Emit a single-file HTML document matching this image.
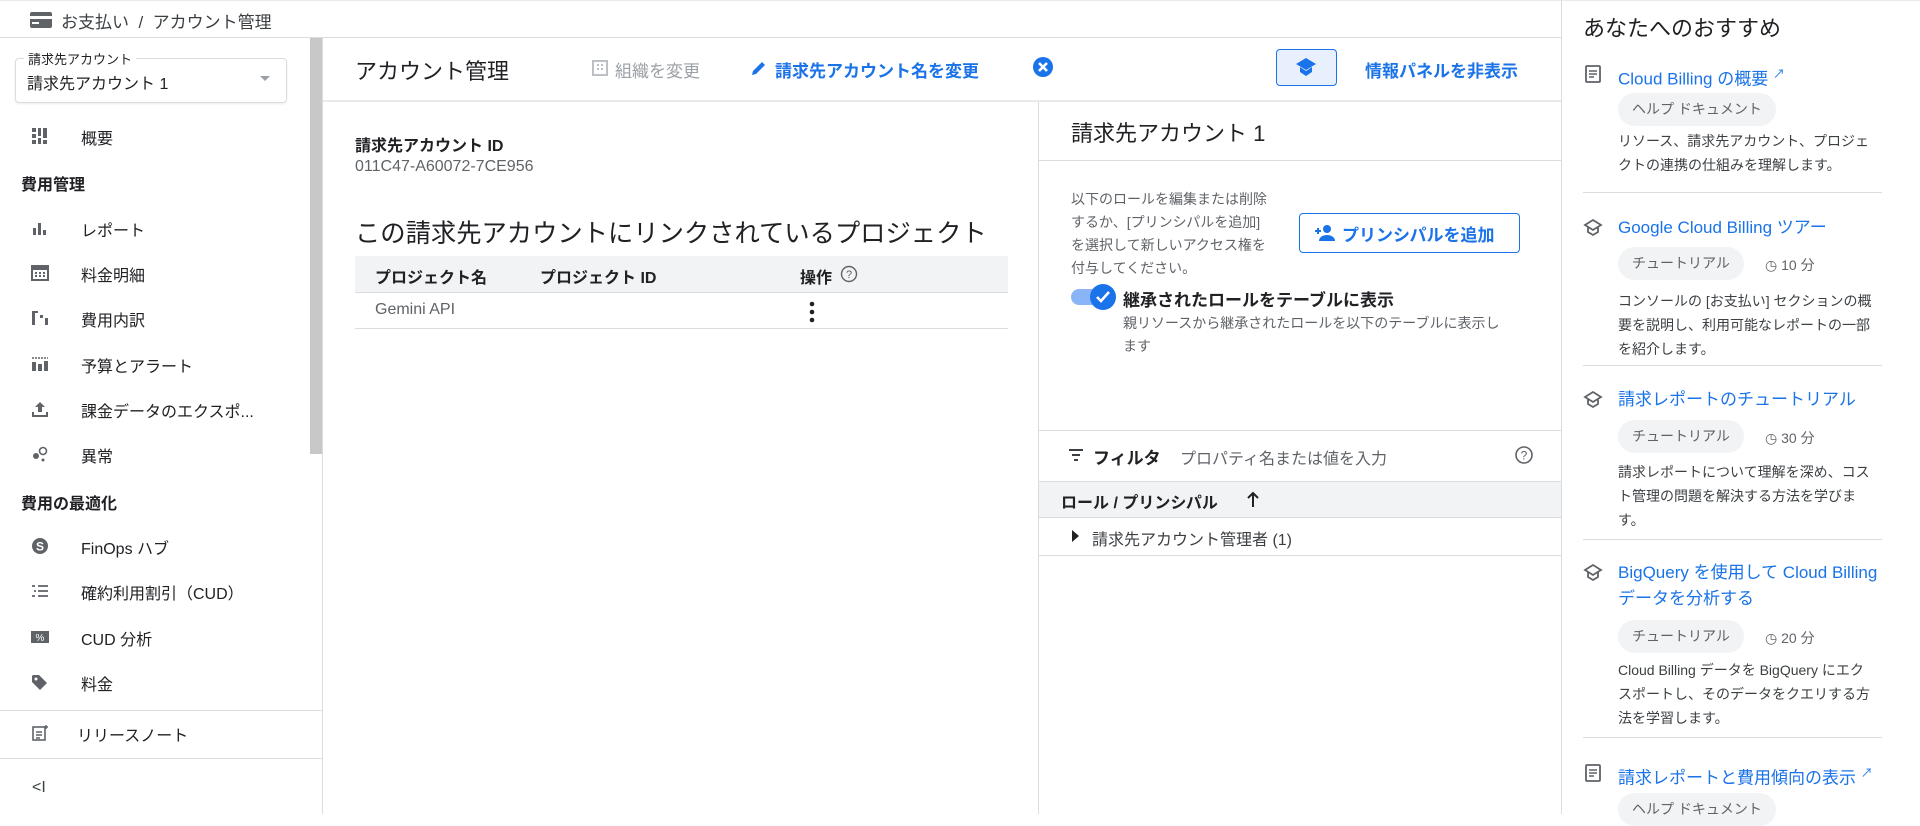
<!DOCTYPE html>
<html><head><meta charset="utf-8">
<style>
*{box-sizing:border-box;margin:0;padding:0}
body{width:1920px;height:814px;overflow:hidden;background:#fff;font-family:"Liberation Sans","Noto Sans CJK JP",sans-serif;color:#202124;position:relative}
.a{position:absolute;white-space:nowrap}
.hl{position:absolute;height:1px;background:#dadce0}
.vl{position:absolute;width:1px;background:#dadce0}
.nav{position:absolute;left:0;width:310px;height:40px;font-size:16px;color:#202124}
.nav .ic{position:absolute;left:30px;top:11px;width:20px;height:18px}
.nav .t{position:absolute;left:81px;top:9px}
.sec{position:absolute;left:21px;font-size:16px;font-weight:bold}
.blue{color:#1a73e8}
.chip{position:absolute;left:1618px;height:33px;border-radius:17px;background:#f1f3f4;color:#5f6368;font-size:14px;line-height:33px;padding:0 14px}
.desc{position:absolute;left:1618px;width:258px;font-size:14px;line-height:24px;color:#3c4043}
.rt{position:absolute;left:1618px;font-size:17px;color:#1a73e8;line-height:26px}
.ri{position:absolute;left:1583px;width:20px;height:20px}
.tm{position:absolute;font-size:14px;color:#5f6368}
</style></head><body>

<div class="hl" style="left:0;top:0;width:1920px;background:#e8eaed"></div>
<svg class="a" style="left:29px;top:11px" width="24" height="18" viewBox="0 0 24 18"><rect x="1" y="1" width="22" height="16" rx="2" fill="#5f6368"/><rect x="1" y="5" width="22" height="3" fill="#fff"/><rect x="3" y="11" width="7" height="2" fill="#fff"/></svg>
<div class="a" style="left:61px;top:8px;font-size:17px;color:#3c4043">お支払い&nbsp;&nbsp;/&nbsp;&nbsp;アカウント管理</div>
<div class="hl" style="left:0;top:37px;width:1561px"></div>

<div class="a" style="left:15px;top:58px;width:272px;height:45px;border:1px solid #dadce0;border-radius:4px;box-shadow:0 1px 2px rgba(0,0,0,.08)"></div>
<div class="a" style="left:24px;top:49px;background:#fff;padding:0 4px;font-size:13px;color:#202124">請求先アカウント</div>
<div class="a" style="left:27px;top:70px;font-size:16px">請求先アカウント 1</div>
<div class="a" style="left:260px;top:76px;width:0;height:0;border-left:5px solid transparent;border-right:5px solid transparent;border-top:5px solid #9aa0a6"></div>
<div class="a" style="left:310px;top:38px;width:12px;height:416px;background:#c8c8c8"></div>
<div class="vl" style="left:322px;top:38px;height:776px"></div>

<div class="nav" style="top:116px"><svg class="ic" viewBox="0 0 20 18"><rect x="2" y="1" width="4" height="4" fill="#5f6368"/><rect x="2" y="7" width="4" height="4" fill="#5f6368"/><rect x="2" y="13" width="4" height="4" fill="#5f6368"/><rect x="8" y="1" width="3" height="8" fill="#5f6368"/><rect x="8" y="11" width="3" height="6" fill="#5f6368"/><rect x="13" y="1" width="4" height="10" fill="#5f6368"/><rect x="13" y="13" width="4" height="4" fill="#5f6368"/></svg><span class="t">概要</span></div>
<div class="sec" style="top:171px">費用管理</div>
<div class="nav" style="top:208px"><svg class="ic" viewBox="0 0 20 18"><rect x="3" y="9" width="3" height="7" fill="#5f6368"/><rect x="8" y="4" width="3" height="12" fill="#5f6368"/><rect x="13" y="11" width="3" height="5" fill="#5f6368"/></svg><span class="t">レポート</span></div>
<div class="nav" style="top:253px"><svg class="ic" viewBox="0 0 20 18"><rect x="2" y="2" width="16" height="14" fill="none" stroke="#5f6368" stroke-width="2"/><rect x="2" y="2" width="16" height="4" fill="#5f6368"/><path d="M5 9h2M9 9h2M13 9h2M5 12h2M9 12h2M13 12h2" stroke="#5f6368" stroke-width="2"/></svg><span class="t">料金明細</span></div>
<div class="nav" style="top:298px"><svg class="ic" viewBox="0 0 20 18"><rect x="2" y="2" width="3" height="14" fill="#5f6368"/><rect x="5" y="2" width="3" height="2" fill="#5f6368"/><rect x="10" y="6" width="3" height="3" fill="#5f6368"/><rect x="15" y="9" width="3" height="7" fill="#5f6368"/></svg><span class="t">費用内訳</span></div>
<div class="nav" style="top:344px"><svg class="ic" viewBox="0 0 20 18"><path d="M2 3h16" stroke="#5f6368" stroke-width="1.5" stroke-dasharray="2 1"/><rect x="2" y="7" width="4" height="9" fill="#5f6368"/><rect x="8" y="9" width="4" height="7" fill="#5f6368"/><rect x="14" y="6" width="4" height="10" fill="#5f6368"/></svg><span class="t">予算とアラート</span></div>
<div class="nav" style="top:389px"><svg class="ic" viewBox="0 0 20 18"><path d="M10 2l-5 5h3v5h4V7h3z" fill="#5f6368"/><path d="M3 12v4h14v-4" stroke="#5f6368" stroke-width="2" fill="none"/></svg><span class="t">課金データのエクスポ...</span></div>
<div class="nav" style="top:434px"><svg class="ic" viewBox="0 0 20 18"><circle cx="6" cy="11" r="3" fill="#5f6368"/><circle cx="13" cy="6" r="3.5" fill="none" stroke="#5f6368" stroke-width="1.6"/><circle cx="13" cy="15" r="1.5" fill="#5f6368"/></svg><span class="t">異常</span></div>
<div class="sec" style="top:490px">費用の最適化</div>
<div class="nav" style="top:526px"><svg class="ic" viewBox="0 0 20 18"><circle cx="10" cy="9" r="8" fill="#5f6368"/><text x="10" y="13.5" font-size="12" fill="#fff" text-anchor="middle" font-family="Liberation Sans" font-weight="bold">S</text></svg><span class="t">FinOps ハブ</span></div>
<div class="nav" style="top:571px"><svg class="ic" viewBox="0 0 20 18"><path d="M2 4h3M8 4h10M4 9h2M8 9h10M2 14h3M8 14h10" stroke="#5f6368" stroke-width="1.8"/></svg><span class="t">確約利用割引（CUD）</span></div>
<div class="nav" style="top:617px"><svg class="ic" viewBox="0 0 20 18"><rect x="1" y="3" width="18" height="12" fill="#5f6368"/><text x="10" y="13" font-size="10" fill="#fff" text-anchor="middle" font-family="Liberation Sans">%</text></svg><span class="t">CUD 分析</span></div>
<div class="nav" style="top:662px"><svg class="ic" viewBox="0 0 20 18"><path d="M2 3v6l8 8 7-7-8-8H3z" fill="#5f6368"/><circle cx="6" cy="6" r="1.5" fill="#fff"/></svg><span class="t">料金</span></div>
<div class="hl" style="left:0;top:710px;width:322px"></div>
<div class="nav" style="top:713px"><svg class="ic" viewBox="0 0 20 18"><rect x="3" y="3" width="12" height="13" fill="none" stroke="#5f6368" stroke-width="1.6"/><path d="M6 8h6M6 11h6M6 14h4" stroke="#5f6368" stroke-width="1.4"/><path d="M16 1v4M14 3h4" stroke="#5f6368" stroke-width="1.4"/></svg><span class="t" style="left:77px">リリースノート</span></div>
<div class="hl" style="left:0;top:758px;width:322px"></div>
<div class="a" style="left:32px;top:779px;font-size:16px;color:#3c4043">&lt;I</div>

<div class="a" style="left:355px;top:54px;font-size:22px;color:#202124">アカウント管理</div>
<svg class="a" style="left:591px;top:59px" width="18" height="18" viewBox="0 0 18 18"><rect x="2" y="2" width="14" height="14" fill="none" stroke="#bdc1c6" stroke-width="2"/><path d="M6 6h2M10 6h2M6 10h2M10 10h2" stroke="#bdc1c6" stroke-width="2"/></svg>
<div class="a" style="left:615px;top:57px;font-size:17px;color:#9aa0a6">組織を変更</div>
<svg class="a" style="left:749px;top:58px" width="18" height="20" viewBox="0 0 18 20"><path d="M3 17l1-4 9-9 3 3-9 9z" fill="#1a73e8"/></svg>
<div class="a blue" style="left:775px;top:57px;font-size:17px;font-weight:bold">請求先アカウント名を変更</div>
<svg class="a" style="left:1032px;top:56px" width="22" height="22" viewBox="0 0 22 22"><circle cx="11" cy="11" r="10" fill="#1a73e8"/><path d="M7 7l8 8M15 7l-8 8" stroke="#fff" stroke-width="2.6"/></svg>
<div class="a" style="left:1276px;top:49px;width:61px;height:37px;background:#e8f0fe;border:1px solid #1a73e8;border-radius:4px"></div>
<svg class="a" style="left:1294px;top:56px" width="24" height="22" viewBox="0 0 24 22"><path d="M12 2L2 8l10 6 10-6z" fill="#1a73e8"/><path d="M6 11v5l6 4 6-4v-5l-6 4z" fill="#1a73e8"/></svg>
<div class="a blue" style="left:1365px;top:57px;font-size:17px;font-weight:bold">情報パネルを非表示</div>
<div class="hl" style="left:323px;top:100px;width:1238px;height:2px;background:#e8eaed"></div>

<div class="a" style="left:355px;top:132px;font-size:16px;font-weight:bold">請求先アカウント ID</div>
<div class="a" style="left:355px;top:158px;font-size:16px;color:#5f6368">011C47-A60072-7CE956</div>
<div class="a" style="left:355px;top:214px;font-size:25.3px;color:#202124">この請求先アカウントにリンクされているプロジェクト</div>
<div class="a" style="left:355px;top:256px;width:653px;height:37px;background:#f1f3f4;border-bottom:1px solid #dadce0"></div>
<div class="a" style="left:375px;top:264px;font-size:16px;font-weight:bold">プロジェクト名</div>
<div class="a" style="left:540px;top:264px;font-size:16px;font-weight:bold">プロジェクト ID</div>
<div class="a" style="left:800px;top:264px;font-size:16px;font-weight:bold">操作</div>
<svg class="a" style="left:840px;top:265px" width="18" height="18" viewBox="0 0 18 18"><circle cx="9" cy="9" r="7.5" fill="none" stroke="#5f6368" stroke-width="1.4"/><text x="9" y="13" font-size="11" fill="#5f6368" text-anchor="middle" font-family="Liberation Sans">?</text></svg>
<div class="a" style="left:375px;top:301px;font-size:16px;color:#5f6368">Gemini API</div>
<svg class="a" style="left:808px;top:300px" width="8" height="24" viewBox="0 0 8 24"><circle cx="4" cy="4" r="2.3" fill="#202124"/><circle cx="4" cy="12" r="2.3" fill="#202124"/><circle cx="4" cy="20" r="2.3" fill="#202124"/></svg>
<div class="hl" style="left:355px;top:328px;width:653px"></div>

<div class="vl" style="left:1038px;top:102px;height:712px"></div>
<div class="a" style="left:1071px;top:116px;font-size:22px">請求先アカウント 1</div>
<div class="hl" style="left:1039px;top:160px;width:522px"></div>
<div class="a" style="left:1071px;top:188px;font-size:14px;line-height:23px;color:#5f6368;white-space:normal;width:206px">以下のロールを編集または削除するか、[プリンシパルを追加] を選択して新しいアクセス権を付与してください。</div>
<div class="a" style="left:1299px;top:213px;width:221px;height:40px;border:1px solid #1a73e8;border-radius:4px"></div>
<svg class="a" style="left:1314px;top:223px" width="22" height="20" viewBox="0 0 22 20"><circle cx="13" cy="6" r="4" fill="#1a73e8"/><path d="M5 18c0-4 4-6 8-6s8 2 8 6z" fill="#1a73e8"/><path d="M4 5v6M1 8h6" stroke="#1a73e8" stroke-width="2"/></svg>
<div class="a blue" style="left:1342px;top:221px;font-size:17px;font-weight:bold">プリンシパルを追加</div>
<div class="a" style="left:1071px;top:289px;width:36px;height:16px;border-radius:8px;background:#8ab4f8"></div>
<svg class="a" style="left:1089px;top:283px" width="28" height="28" viewBox="0 0 28 28"><circle cx="14" cy="14" r="13" fill="#1a73e8"/><path d="M8 14l4 4 8-9" stroke="#fff" stroke-width="2.6" fill="none"/></svg>
<div class="a" style="left:1123px;top:286px;font-size:17px;font-weight:bold">継承されたロールをテーブルに表示</div>
<div class="a" style="left:1123px;top:312px;font-size:14px;line-height:23px;color:#5f6368;white-space:normal;width:388px">親リソースから継承されたロールを以下のテーブルに表示します</div>
<div class="hl" style="left:1039px;top:430px;width:522px"></div>
<svg class="a" style="left:1067px;top:447px" width="18" height="16" viewBox="0 0 18 16"><path d="M2 3h14M5 8h8M7 13h4" stroke="#3c4043" stroke-width="2"/></svg>
<div class="a" style="left:1093px;top:444px;font-size:17px;font-weight:bold">フィルタ</div>
<div class="a" style="left:1180px;top:445px;font-size:16px;color:#5f6368">プロパティ名または値を入力</div>
<svg class="a" style="left:1514px;top:445px" width="20" height="20" viewBox="0 0 20 20"><circle cx="10" cy="10" r="8" fill="none" stroke="#5f6368" stroke-width="1.6"/><text x="10" y="14.5" font-size="12" fill="#5f6368" text-anchor="middle" font-family="Liberation Sans">?</text></svg>
<div class="a" style="left:1039px;top:481px;width:522px;height:37px;background:#f1f3f4;border-top:1px solid #dadce0;border-bottom:1px solid #dadce0"></div>
<div class="a" style="left:1061px;top:489px;font-size:16px;font-weight:bold">ロール / プリンシパル</div>
<svg class="a" style="left:1246px;top:490px" width="14" height="18" viewBox="0 0 14 18"><path d="M7 17V3M2 8l5-5 5 5" stroke="#202124" stroke-width="2" fill="none"/></svg>
<div class="a" style="left:1072px;top:530px;width:0;height:0;border-top:6px solid transparent;border-bottom:6px solid transparent;border-left:7px solid #202124"></div>
<div class="a" style="left:1092px;top:526px;font-size:16px;color:#3c4043">請求先アカウント管理者 (1)</div>
<div class="hl" style="left:1039px;top:555px;width:522px"></div>

<div class="vl" style="left:1561px;top:0;height:814px"></div>
<div class="a" style="left:1583px;top:11px;font-size:22px">あなたへのおすすめ</div>

<svg class="ri" style="top:64px" viewBox="0 0 20 20"><rect x="3" y="2" width="14" height="16" rx="1" fill="none" stroke="#5f6368" stroke-width="1.8"/><path d="M6 7h8M6 10h8M6 13h5" stroke="#5f6368" stroke-width="1.5"/></svg>
<div class="rt" style="top:61px">Cloud Billing の概要 <span style="font-size:12px;vertical-align:super">↗</span></div>
<div class="chip" style="top:93px">ヘルプ ドキュメント</div>
<div class="desc" style="top:129px">リソース、請求先アカウント、プロジェクトの連携の仕組みを理解します。</div>
<div class="hl" style="left:1583px;top:192px;width:299px"></div>

<svg class="ri" style="top:218px" viewBox="0 0 20 20"><path d="M10 2L2 7l8 5 8-5z" fill="none" stroke="#5f6368" stroke-width="1.8"/><path d="M5 9v5l5 3 5-3V9" fill="none" stroke="#5f6368" stroke-width="1.8"/></svg>
<div class="rt" style="top:215px">Google Cloud Billing ツアー</div>
<div class="chip" style="top:247px">チュートリアル</div>
<div class="tm" style="left:1765px;top:255px">◷ 10 分</div>
<div class="desc" style="top:289px">コンソールの [お支払い] セクションの概要を説明し、利用可能なレポートの一部を紹介します。</div>
<div class="hl" style="left:1583px;top:365px;width:299px"></div>

<svg class="ri" style="top:390px" viewBox="0 0 20 20"><path d="M10 2L2 7l8 5 8-5z" fill="none" stroke="#5f6368" stroke-width="1.8"/><path d="M5 9v5l5 3 5-3V9" fill="none" stroke="#5f6368" stroke-width="1.8"/></svg>
<div class="rt" style="top:387px">請求レポートのチュートリアル</div>
<div class="chip" style="top:420px">チュートリアル</div>
<div class="tm" style="left:1765px;top:428px">◷ 30 分</div>
<div class="desc" style="top:460px">請求レポートについて理解を深め、コスト管理の問題を解決する方法を学びます。</div>
<div class="hl" style="left:1583px;top:539px;width:299px"></div>

<svg class="ri" style="top:563px" viewBox="0 0 20 20"><path d="M10 2L2 7l8 5 8-5z" fill="none" stroke="#5f6368" stroke-width="1.8"/><path d="M5 9v5l5 3 5-3V9" fill="none" stroke="#5f6368" stroke-width="1.8"/></svg>
<div class="rt" style="top:560px;white-space:normal;width:270px">BigQuery を使用して Cloud Billing データを分析する</div>
<div class="chip" style="top:620px">チュートリアル</div>
<div class="tm" style="left:1765px;top:628px">◷ 20 分</div>
<div class="desc" style="top:658px">Cloud Billing データを BigQuery にエクスポートし、そのデータをクエリする方法を学習します。</div>
<div class="hl" style="left:1583px;top:737px;width:299px"></div>

<svg class="ri" style="top:763px" viewBox="0 0 20 20"><rect x="3" y="2" width="14" height="16" rx="1" fill="none" stroke="#5f6368" stroke-width="1.8"/><path d="M6 7h8M6 10h8M6 13h5" stroke="#5f6368" stroke-width="1.5"/></svg>
<div class="rt" style="top:760px">請求レポートと費用傾向の表示 <span style="font-size:12px;vertical-align:super">↗</span></div>
<div class="chip" style="top:793px">ヘルプ ドキュメント</div>
</body></html>
